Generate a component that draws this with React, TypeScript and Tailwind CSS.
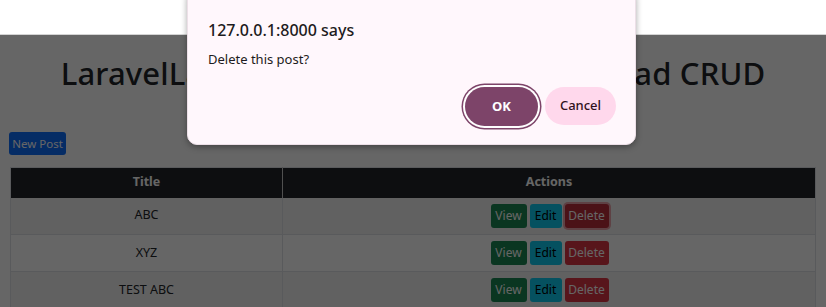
const posts = ["ABC", "XYZ", "TEST ABC"];

export default function App() {
    return (
        <div className="relative w-[826px] h-[307px] overflow-hidden bg-white font-['Noto_Sans',sans-serif]">
            <div className="h-[35px] border-b border-[#d4d4d4] bg-white" />

            {/* page behind the alert */}
            <div className="relative h-[272px] bg-white">
                <div className="px-[9px]">
                    <h1 className="pt-[19px] text-center text-[31px] leading-[38px] font-medium tracking-[0.15px] text-[#212529] whitespace-nowrap">
                        LaravelLaravel 11 Multiple Image Upload CRUD
                    </h1>
                    <button
                        type="button"
                        className="mt-[40px] h-[23px] w-[57px] rounded-[3px] bg-[#0d6efd] text-[11.5px] text-white"
                    >
                        New Post
                    </button>
                    <table className="ml-px mt-[12px] w-[806px] border-collapse border border-[#dee2e6] text-[12.5px] text-[#212529]">
                        <thead>
                            <tr className="h-[30px] bg-[#212529] text-white">
                                <th className="w-[272px] border-r border-[#c8c8c8] font-bold">Title</th>
                                <th className="font-bold">Actions</th>
                            </tr>
                        </thead>
                        <tbody>
                            {posts.map((title, i) => (
                                <tr
                                    key={title}
                                    className={`h-[37px] border-b border-[#dee2e6] ${i % 2 === 0 ? "bg-[#f2f2f2]" : "bg-white"}`}
                                >
                                    <td className="border-r border-[#dee2e6] text-center">{title}</td>
                                    <td>
                                        <div className="flex justify-center gap-[3px] pl-px">
                                            <span className="flex h-[24px] w-[36px] items-center justify-center rounded-[3px] bg-[#198754] text-[12px] text-white">
                                                View
                                            </span>
                                            <span className="flex h-[24px] w-[32px] items-center justify-center rounded-[3px] bg-[#0dcaf0] text-[12px] text-black">
                                                Edit
                                            </span>
                                            <span
                                                className={`flex h-[24px] w-[44px] items-center justify-center rounded-[3px] text-[12px] text-white ${
                                                    i === 0
                                                        ? "bg-[#bb2d3b] shadow-[0_0_0_2px_rgba(225,83,97,0.5)]"
                                                        : "bg-[#dc3545]"
                                                }`}
                                            >
                                                Delete
                                            </span>
                                        </div>
                                    </td>
                                </tr>
                            ))}
                        </tbody>
                    </table>
                </div>
                <div className="absolute inset-0 bg-black/60" />
            </div>

            {/* alert dialog */}
            <div className="absolute left-[187px] top-[-12px] flex h-[157px] w-[449px] flex-col rounded-[10px] border border-[#ecdfe7] bg-[#fff7fc] pl-[20px] pr-[19px] pt-[30px] pb-[18px] shadow-[0_2px_6px_rgba(0,0,0,0.35)]">
                <div className="text-[16px] leading-[22px] font-medium text-[#1d1b20]">127.0.0.1:8000 says</div>
                <div className="mt-[9px] text-[13px] leading-[18px] text-[#1d1b20]">Delete this post?</div>
                <div className="mt-auto flex justify-end gap-[7px]">
                    <button
                        type="button"
                        className="h-[39px] w-[73px] rounded-full bg-[#7d4469] text-[13px] font-bold text-white shadow-[0_0_0_2px_#ffffff,0_0_0_3.5px_#7d4469]"
                    >
                        OK
                    </button>
                    <button
                        type="button"
                        className="h-[38px] w-[71px] rounded-full bg-[#ffd8ec] text-[13px] font-medium text-[#31111d]"
                    >
                        Cancel
                    </button>
                </div>
            </div>
        </div>
    );
}
